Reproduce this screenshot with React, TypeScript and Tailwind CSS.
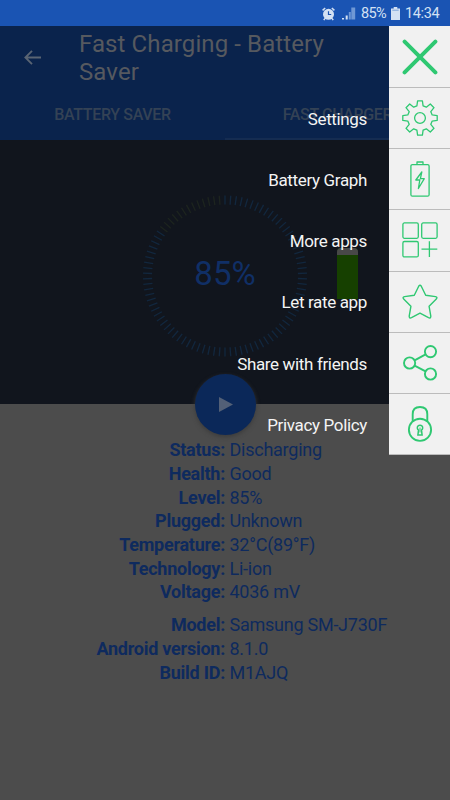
import React from 'react';

const info = [
  { label: 'Status', value: 'Discharging' },
  { label: 'Health', value: 'Good' },
  { label: 'Level', value: '85%' },
  { label: 'Plugged', value: 'Unknown' },
  { label: 'Temperature', value: '32°C(89°F)' },
  { label: 'Technology', value: 'Li-ion' },
  { label: 'Voltage', value: '4036 mV' },
];

const device = [
  { label: 'Model', value: 'Samsung SM-J730F' },
  { label: 'Android version', value: '8.1.0' },
  { label: 'Build ID', value: 'M1AJQ' },
];

const CloseIcon = () => (
  <svg className="h-9 w-9" viewBox="0 0 36 36" fill="none" stroke="#2fc872" strokeWidth="4" strokeLinecap="round">
    <path d="M2.6 2.6 33.4 33.4M33.4 2.6 2.6 33.4" />
  </svg>
);

const SettingsIcon = () => (
  <svg className="h-9 w-9" viewBox="0 0 36 36" fill="none" stroke="#2fc872" strokeWidth="1.3" strokeLinejoin="round">
    <path d="M15.6.8h4.8l.7 5 3.2 1.4 4-3.2 3.7 3.7-3.2 4 1.4 3.2 5 .7v4.8l-5 .7-1.4 3.2 3.2 4-3.7 3.7-4-3.2-3.2 1.4-.7 5h-4.8l-.7-5-3.2-1.4-4 3.2L4 28.3l3.2-4-1.4-3.2-5-.7v-4.8l5-.7 1.4-3.2-3.2-4L7.7 4l4 3.2 3.2-1.4z" />
    <circle cx="18" cy="18" r="5.4" />
  </svg>
);

const BatteryIcon = () => (
  <svg className="h-9 w-9" viewBox="0 0 36 36" fill="none" stroke="#2fc872" strokeWidth="1.3" strokeLinejoin="round">
    <rect x="8.9" y="3.6" width="18.2" height="31.6" rx="1.5" />
    <path d="M15 3.6V1h6v2.6M19.8 11l-6 8h4l-1.4 8.5 5.9-9.8h-3.9z" />
  </svg>
);

const AppsIcon = () => (
  <svg className="h-9 w-9" viewBox="0 0 36 36" fill="none" stroke="#2fc872" strokeWidth="1.3">
    <rect x=".9" y=".9" width="15.4" height="15.4" rx="1.5" />
    <rect x="19.7" y=".9" width="15.4" height="15.4" rx="1.5" />
    <rect x=".9" y="19.5" width="15.4" height="15.4" rx="1.5" />
    <path d="M27.4 19.3v15.7M19.5 27.2h15.8" />
  </svg>
);

const StarIcon = () => (
  <svg className="h-9 w-9" viewBox="0 0 36 36" fill="none" stroke="#2fc872" strokeWidth="1.4" strokeLinejoin="round">
    <path d="M16.700 2.200q1.300-1.900 2.600 0l4.400 9 9.800 1.400q2.400.600.800 2.500l-7.200 7.200 1.700 9.900q0 2.500-2.300 1.500L18 29.200l-8.500 4.500q-2.300 1-2.300-1.500l1.700-9.900-7.200-7.200q-1.600-1.900.8-2.500l9.800-1.400z" />
  </svg>
);

const ShareIcon = () => (
  <svg className="h-9 w-9" viewBox="0 0 36 36" fill="none" stroke="#2fc872" strokeWidth="1.9">
    <circle cx="7.6" cy="18" r="5.6" />
    <circle cx="28.5" cy="6.6" r="5.6" />
    <circle cx="28.5" cy="29" r="5.6" />
    <path d="m12.6 15.300 11-6M12.600 20.600l11 5.700" />
  </svg>
);

const LockIcon = () => (
  <svg className="h-9 w-9" viewBox="0 0 36 36" fill="none" stroke="#2fc872" strokeWidth="1.9">
    <circle cx="18" cy="23.8" r="11.1" />
    <path d="M10.7 15.500V8.200q0-7.200 7.300-7.200t7.300 7.200v7.300" />
    <path d="M16.500 24.100a2.700 2.700 0 1 1 3 0l.6 5h-4.200z" strokeWidth="1.500" />
    <path d="M18 21.500v5" strokeWidth="1" />
  </svg>
);

const menu = [
  { label: 'Settings', icon: SettingsIcon },
  { label: 'Battery Graph', icon: BatteryIcon },
  { label: 'More apps', icon: AppsIcon },
  { label: 'Let rate app', icon: StarIcon },
  { label: 'Share with friends', icon: ShareIcon },
  { label: 'Privacy Policy', icon: LockIcon },
];

const StatusBar = () => (
  <div className="flex h-[26px] items-center bg-[#1a54b3] pl-[322px] pt-px text-[#d3e1f3]">
    <svg className="h-[14px] w-[13px] shrink-0" viewBox="0 0 13 14">
      <circle cx="6.5" cy="7.3" r="5.5" fill="currentColor" />
      <path d="M.6 3.400 3.200 1M12.400 3.400 9.800 1M3 11.300l-1.200 1.900M10 11.300l1.200 1.900" stroke="currentColor" strokeWidth="1.5" />
      <path d="M6.5 4.200v3.300h2.700" fill="none" stroke="#1a54b3" strokeWidth="1.2" />
    </svg>
    <svg className="ml-[7px] h-[13px] w-[14px] shrink-0" viewBox="0 0 14 13">
      <path d="M0 11h2v1.500H0zM3.700 8.500h2v4h-2z" fill="currentColor" />
      <path d="M6.800 5h2v7.500h-2zM9.300.500h3.900v12H9.300z" fill="#6f98d5" />
    </svg>
    <span className="ml-[5px] w-[26px] text-[14.5px] tracking-[-0.6px]">85%</span>
    <svg className="ml-[4px] h-[13px] w-[9px] shrink-0" viewBox="0 0 9 13">
      <path d="M2.700 0h3.600v1.500H9V13H0V1.500h2.700z" fill="currentColor" />
      <path d="M1.300 3.200h6.400" stroke="#7ba2d8" strokeWidth="1" />
    </svg>
    <span className="ml-[5px] text-[14.5px] tracking-[-0.35px]">14:34</span>
  </div>
);

const Gauge = () => (
  <div className="relative flex h-[164px] w-[166px] items-center justify-center">
    <svg className="absolute inset-0 h-full w-full" viewBox="-83 -82 166 164">
      {Array.from({ length: 90 }, (_, i) => (
        <line
          key={i}
          x1="0"
          x2="0"
          y1="-80.5"
          y2="-71.5"
          stroke={i > 76 ? '#1d241f' : '#12273e'}
          strokeWidth="1.3"
          transform={`scale(1.02 1) rotate(${i * 4})`}
        />
      ))}
    </svg>
    <span className="pb-[5px] text-[33px] leading-none text-[#102f66]">85%</span>
  </div>
);

const InfoRow = ({ label, value }: { label: string; value: string }) => (
  <div className="flex h-[23.7px] items-center text-[18px] tracking-[-0.25px] text-[#0e2a5e]">
    <span className="w-[225px] text-right font-bold">{label}:</span>
    <span className="ml-[4.5px]">{value}</span>
  </div>
);

const App = () => {
  return (
    <div className="relative h-[800px] w-[450px] overflow-hidden bg-[#4c4c4c] font-[Roboto,sans-serif]">
      <StatusBar />

      {/* Toolbar */}
      <header className="flex h-[114px] flex-col bg-[#0a234c]">
        <div className="flex h-[63px] items-center pl-6">
          <svg className="h-[15px] w-[17px]" viewBox="0 0 17 15" fill="none" stroke="#596473" strokeWidth="1.9">
            <path d="M8 .8 1.400 7.500 8 14.200M1.400 7.500H17" />
          </svg>
          <h1 className="ml-[38px] w-[260px] text-[24px] leading-[28px] tracking-[0.1px] text-[#56595f]">
            Fast Charging - Battery Saver
          </h1>
        </div>
        <div className="flex h-[51px] text-center text-[16px] font-medium tracking-[-0.35px] text-[#344255]">
          <div className="w-[225px] pt-[14px]">BATTERY SAVER</div>
          <div className="w-[225px] border-b-2 border-[#152c51] pt-[14px]">FAST CHARGER</div>
        </div>
      </header>

      {/* Battery level */}
      <section className="relative h-[264px] bg-[#11151d] pl-[142px] pt-[54px]">
        <Gauge />
        <div className="absolute left-[337px] top-[108px] h-[51px] w-[21px] rounded-t-sm bg-[#164000]">
          <div className="h-[7px] rounded-t-sm bg-[#484848]" />
        </div>
        <button className="absolute left-[194.5px] top-[234px] flex h-[61px] w-[61px] items-center justify-center rounded-full bg-[#0b2859] shadow-[0_2px_4px_#3c3c3c]">
          <svg className="ml-px h-[15px] w-[14px]" viewBox="0 0 14 15">
            <path d="M0 0v15l14-7.500z" fill="#536077" />
          </svg>
        </button>
      </section>

      {/* Battery details */}
      <section className="pt-[34px]">
        {info.map((row) => (
          <InfoRow key={row.label} {...row} />
        ))}
        <div className="mt-[9px]">
          {device.map((row) => (
            <InfoRow key={row.label} {...row} />
          ))}
        </div>
      </section>

      {/* Side menu */}
      <nav className="absolute right-0 top-[26px] flex w-[260px] flex-col items-end">
        <div className="flex h-[62px] w-[61px] items-center justify-center border-b border-[#bcbcbc] bg-[#f1f1f1]">
          <CloseIcon />
        </div>
        {menu.map(({ label, icon: Icon }) => (
          <div key={label} className="flex h-[61.2px] items-center justify-end">
            <span className="mr-[22px] pt-[2px] text-[17px] tracking-[-0.35px] text-[#f4f4f4]">{label}</span>
            <div className="flex h-full w-[61px] items-center justify-center border-b border-[#bcbcbc] bg-[#f1f1f1]">
              <Icon />
            </div>
          </div>
        ))}
      </nav>
    </div>
  );
};

export default App;
